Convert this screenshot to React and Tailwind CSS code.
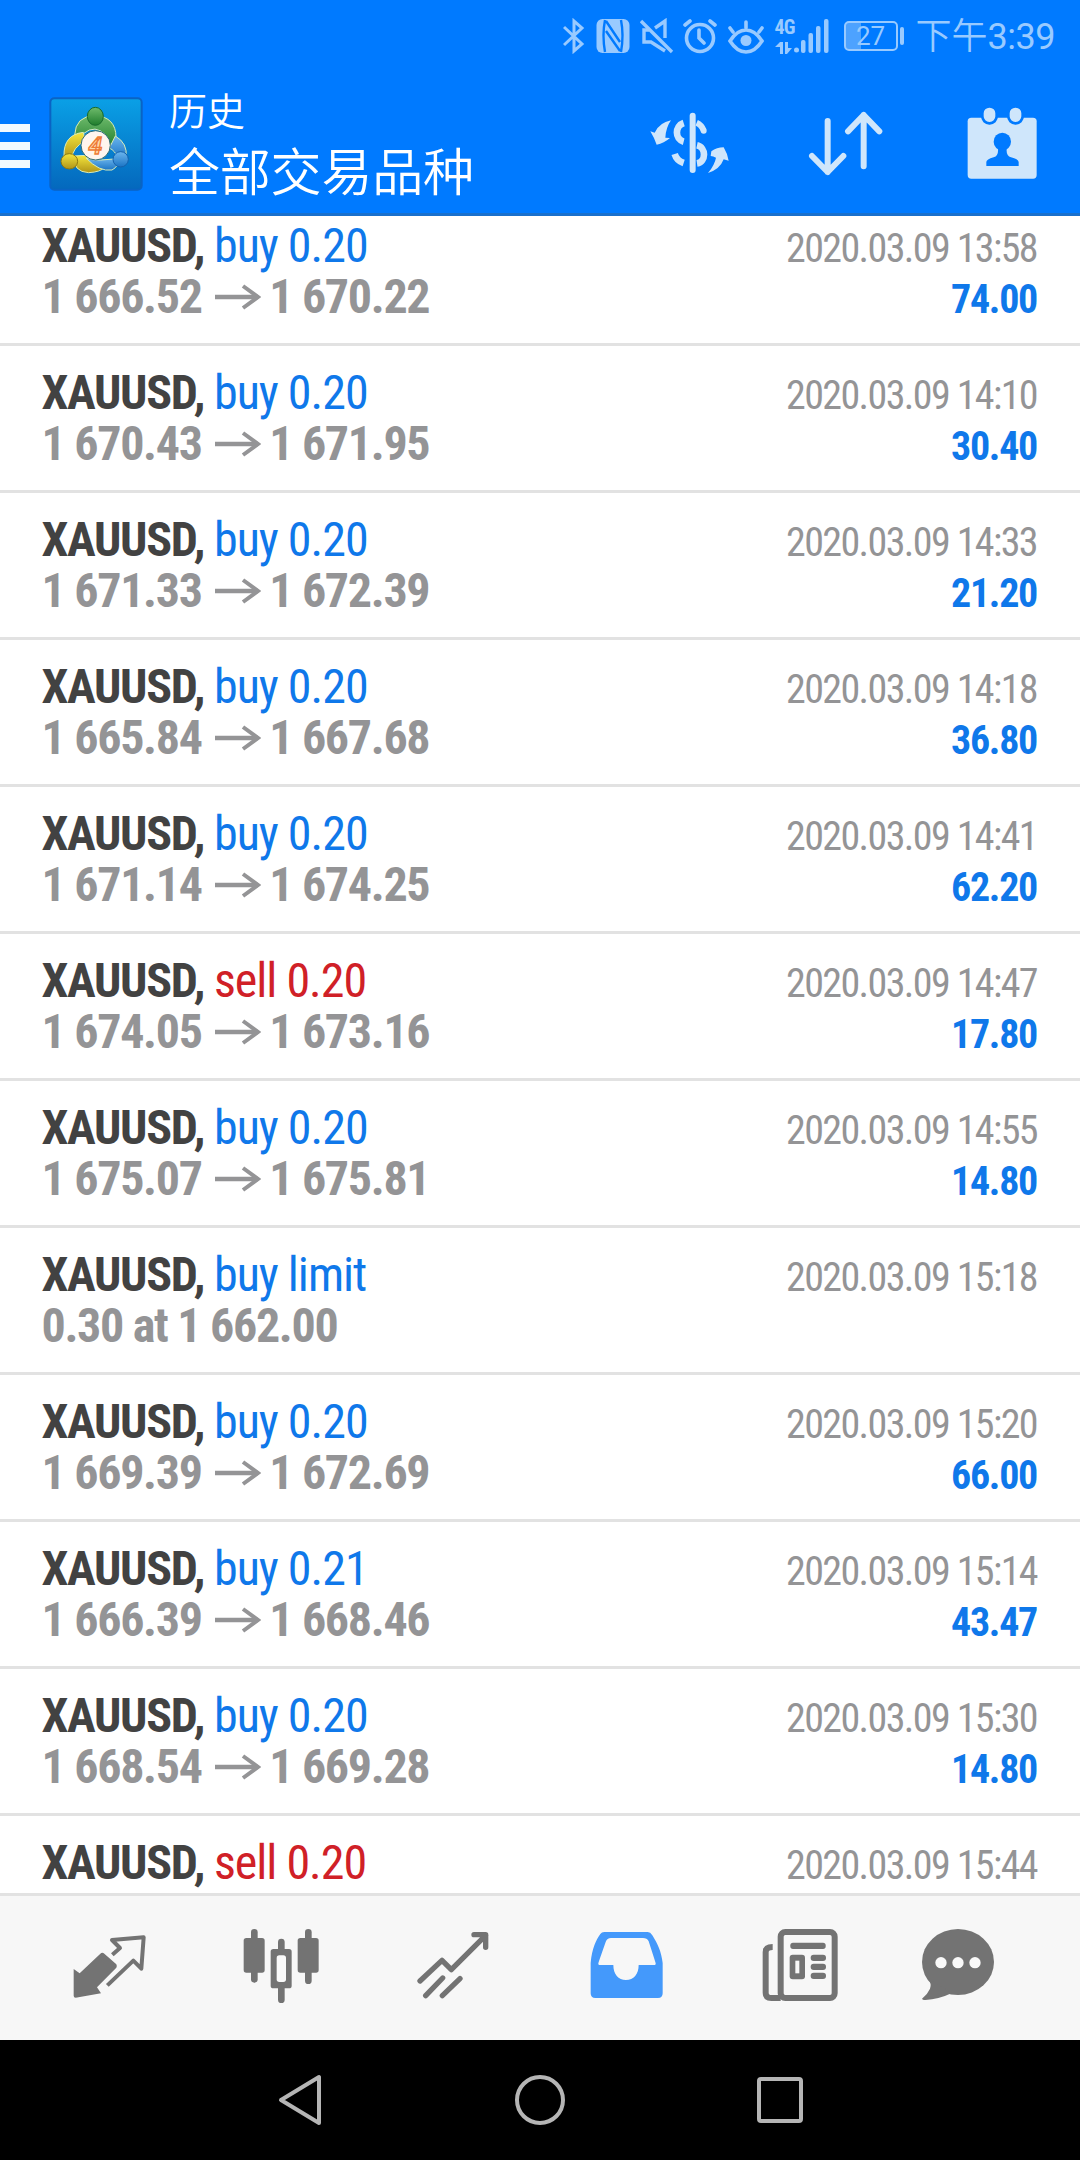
const deals = [
  { side: "buy", volume: "0.20", open: "1 666.52", close: "1 670.22", time: "2020.03.09 13:58", profit: "74.00" },
  { side: "buy", volume: "0.20", open: "1 670.43", close: "1 671.95", time: "2020.03.09 14:10", profit: "30.40" },
  { side: "buy", volume: "0.20", open: "1 671.33", close: "1 672.39", time: "2020.03.09 14:33", profit: "21.20" },
  { side: "buy", volume: "0.20", open: "1 665.84", close: "1 667.68", time: "2020.03.09 14:18", profit: "36.80" },
  { side: "buy", volume: "0.20", open: "1 671.14", close: "1 674.25", time: "2020.03.09 14:41", profit: "62.20" },
  { side: "sell", volume: "0.20", open: "1 674.05", close: "1 673.16", time: "2020.03.09 14:47", profit: "17.80" },
  { side: "buy", volume: "0.20", open: "1 675.07", close: "1 675.81", time: "2020.03.09 14:55", profit: "14.80" },
  { side: "buy", volume: "limit", note: "0.30 at 1 662.00", time: "2020.03.09 15:18" },
  { side: "buy", volume: "0.20", open: "1 669.39", close: "1 672.69", time: "2020.03.09 15:20", profit: "66.00" },
  { side: "buy", volume: "0.21", open: "1 666.39", close: "1 668.46", time: "2020.03.09 15:14", profit: "43.47" },
  { side: "buy", volume: "0.20", open: "1 668.54", close: "1 669.28", time: "2020.03.09 15:30", profit: "14.80" },
  { side: "sell", volume: "0.20", time: "2020.03.09 15:44" },
];

function StatusBar() {
  return (
    <div className="flex h-[72px] items-center justify-end pr-[25px] text-[#99caff]">
      <svg className="h-9 w-[22px]" viewBox="0 0 22 36" fill="none" stroke="currentColor" strokeWidth="3">
        <path d="M1 9 L19 26 L11 33 V3 L19 10 L1 27" />
      </svg>
      <svg className="ml-[11px] h-9 w-[34px]" viewBox="0 0 34 36">
        <rect x="0.5" y="1" width="33" height="34" rx="6" fill="currentColor" />
        <path d="M9 2 Q6 17 9 34 M10 3 L24 24 M10 13 L24 33 M25 2 Q28 17 25 34" fill="none" stroke="#007aff" strokeWidth="2.4" />
      </svg>
      <svg className="ml-2.5 h-9 w-[34px]" viewBox="0 0 34 36" fill="none" stroke="currentColor" strokeWidth="3.4">
        <path d="M1 3 L32 34" />
        <path d="M15 10 L25 3 V20 M9 12 H4 V24 H11 L25 33" />
      </svg>
      <svg className="ml-[9px] h-9 w-[34px]" viewBox="0 0 34 36" fill="none" stroke="currentColor" strokeWidth="3.6" strokeLinecap="round">
        <circle cx="17" cy="20" r="13.5" />
        <path d="M16 12 V20 L21 25 M2 7 L7 3 M32 7 L27 3" />
      </svg>
      <svg className="ml-2.5 h-9 w-[38px]" viewBox="0 0 38 36" fill="none" stroke="currentColor" strokeWidth="3.6" strokeLinecap="round">
        <path d="M3 23 Q10 12 19 12 Q28 12 35 23 Q28 34 19 34 Q10 34 3 23Z M19 10 V4 M6 14 L3 10 M32 14 L35 10" />
        <circle cx="19" cy="22.5" r="5.5" fill="currentColor" stroke="none" />
      </svg>
      <div className="ml-2.5 flex h-9 items-end">
        <div className="flex h-9 w-[19px] flex-col justify-between">
          <span className="text-[20px] leading-[19px] font-bold tracking-[-1px]">4G</span>
          <svg className="h-3 w-[18px]" viewBox="0 0 18 12" fill="currentColor">
            <path d="M0 5 L5 0 H8 V12 H5 V5Z M10 0 H13 V6 H17 L12 12 H10Z" />
          </svg>
        </div>
        <svg className="h-9 w-[35px]" viewBox="19 0 35 36" fill="currentColor">
          <circle cx="21.5" cy="32" r="2.5" />
          <rect x="26" y="22" width="4.5" height="13" rx="2" />
          <rect x="33.5" y="15" width="4.5" height="20" rx="2" />
          <rect x="41" y="8" width="4.5" height="27" rx="2" />
          <rect x="49" y="1" width="4.5" height="34" rx="2" />
        </svg>
      </div>
      <div className="ml-[15px] flex items-center gap-0.5">
        <div className="flex h-[30px] w-[54px] items-center justify-center rounded-[5px] border-2 border-current bg-linear-to-r from-[#4da2ff] from-30% to-transparent to-30% font-[Roboto] text-[26px] leading-none">
          27
        </div>
        <div className="h-[18px] w-1 rounded-sm bg-current" />
      </div>
      <div className="mt-0.5 ml-3 flex items-center font-[Roboto,'Noto_Sans_CJK_SC',sans-serif] text-[36px] leading-[44px]">
        <span className="font-[350]">下午</span>
        <span className="tracking-[-0.5px]">3:39</span>
      </div>
    </div>
  );
}

function Logo() {
  return (
    <svg className="mt-0.5 ml-[19px] size-[94px]" viewBox="15 15 282 282">
      <defs>
        <linearGradient id="tile" x1="0" y1="0" x2="0" y2="1">
          <stop offset="0" stopColor="#0aa0e6" />
          <stop offset="1" stopColor="#0468bd" />
        </linearGradient>
        <linearGradient id="green" x1="0" y1="0" x2="0" y2="1">
          <stop offset="0" stopColor="#6fbb6c" />
          <stop offset="1" stopColor="#1f7d2c" />
        </linearGradient>
        <linearGradient id="gold" x1="0" y1="0" x2="0" y2="1">
          <stop offset="0" stopColor="#f4e53c" />
          <stop offset="1" stopColor="#b09418" />
        </linearGradient>
        <linearGradient id="sky" x1="0" y1="0" x2="0" y2="1">
          <stop offset="0" stopColor="#6cb6ee" />
          <stop offset="1" stopColor="#1b74c4" />
        </linearGradient>
      </defs>
      <rect x="19" y="19" width="274" height="274" rx="12" fill="url(#tile)" stroke="#0a63c4" strokeWidth="6" />
      <g stroke="#d8ecb8" strokeWidth="3">
        <path d="M92 130 Q94 72 154 70 Q216 76 216 136 Q214 160 204 170 L186 130 Q154 95 118 125 Q104 122 92 130Z" fill="url(#green)" />
        <path d="M118 121 Q58 128 60 192 L84 200 Q84 168 124 146Z" fill="url(#gold)" />
        <path d="M88 192 Q88 240 134 242 Q170 240 182 226 Q150 220 128 190Z" fill="url(#gold)" />
        <path d="M214 132 Q252 154 246 196 L222 200 Q214 176 196 168Z" fill="url(#sky)" />
        <path d="M126 198 Q150 206 170 204 L224 200 Q226 222 204 234 Q166 240 126 198Z" fill="url(#sky)" />
      </g>
      <ellipse cx="154" cy="73" rx="24" ry="27" fill="url(#green)" stroke="#17692b" strokeWidth="3" />
      <ellipse cx="76" cy="208" rx="25" ry="23" fill="url(#gold)" stroke="#8d7a12" strokeWidth="3" />
      <ellipse cx="230" cy="202" rx="23" ry="23" fill="url(#sky)" stroke="#1561ac" strokeWidth="3" />
      <circle cx="155" cy="160" r="44" fill="#fff5ee" stroke="#2d6b73" strokeWidth="3" />
      <text x="154" y="186" textAnchor="middle" fontSize="74" fontFamily="Roboto, sans-serif" fontStyle="italic" fontWeight="700" fill="#ffd9a8" stroke="#ee7a35" strokeWidth="4">
        4
      </text>
    </svg>
  );
}

function Toolbar() {
  return (
    <div className="flex h-36 items-center border-b-[3px] border-[#1a70cc] pr-[43px]">
      <div className="mt-1.5 flex flex-col gap-2.5">
        <span className="h-2 w-[30px] bg-[#f2faff]" />
        <span className="h-2 w-[30px] bg-[#f2faff]" />
        <span className="h-2 w-[30px] bg-[#f2faff]" />
      </div>
      <Logo />
      <div className="mt-0.5 ml-[26px] flex-1 font-['Noto_Sans_CJK_SC',sans-serif] font-[350] text-white">
        <div className="text-[38px] leading-[50px]">历史</div>
        <div className="text-[51px] leading-[70px] tracking-[-0.2px]">全部交易品种</div>
      </div>
      <div className="flex items-center text-[#cfe6fb]">
        <svg className="h-[66px] w-[84px]" viewBox="0 0 252 198" fill="none" stroke="currentColor">
          <path d="M134 17 V180" strokeWidth="18" strokeLinecap="round" />
          <path d="M107 39 C80 48 80 88 107 95 M80 132 Q86 152 107 159 M147 106 C175 112 175 156 147 160" strokeWidth="20" />
          <path d="M146 38 Q160 44 167 61" strokeWidth="18" />
          <circle cx="167" cy="62" r="9" fill="currentColor" stroke="none" />
          <path
            d="M7 64 L20 68 Q34 38 69 31 Q54 52 52 83 L66 84 Q48 100 26 104 Q18 82 7 64Z M190 124 Q206 112 227 112 Q238 130 242 152 L227 148 Q216 178 180 189 Q200 165 204 143 Q196 138 188 138Z"
            fill="currentColor"
            stroke="none"
          />
        </svg>
        <svg className="ml-[76px] h-[66px] w-20" viewBox="0 0 240 198" fill="none" stroke="currentColor" strokeWidth="18" strokeLinecap="round" strokeLinejoin="round">
          <path d="M59 33 V186 M12 138 L59 186 L106 138 M167 169 V15 M120 64 L167 15 L214 64" />
        </svg>
        <svg className="ml-[79px] h-[74px] w-[70px]" viewBox="0 0 210 222" fill="currentColor">
          <rect x="2" y="35" width="207" height="183" rx="11" />
          <g stroke="#007aff" strokeWidth="8">
            <rect x="46" y="1" width="43" height="51" rx="21" />
            <rect x="124" y="1" width="43" height="51" rx="21" />
          </g>
          <g fill="#007aff">
            <ellipse cx="106" cy="107" rx="26" ry="27" />
            <path d="M58 180 V168 Q58 160 80 154 Q95 150 93 128 H119 Q117 150 132 154 Q155 160 155 168 V180Z" />
          </g>
        </svg>
      </div>
    </div>
  );
}

function DealRow({ deal }) {
  return (
    <div className="flex h-[147px] shrink-0 justify-between border-b-[3px] border-[#e2e2e2] pt-[21px] pr-[43px] pl-[41.5px] leading-[51px]">
      <div className="text-[48px] tracking-[-1.3px] whitespace-nowrap">
        <div>
          <span className="font-bold text-[#424242]">XAUUSD,</span>{" "}
          <span className={deal.side === "sell" ? "tracking-[-1px] text-[#d02027]" : "tracking-[-1px] text-[#0f78ea]"}>
            {deal.side} {deal.volume}
          </span>
        </div>
        <div className="flex items-center font-bold text-[#949496]">
          {deal.note}
          {deal.open && (
            <>
              {deal.open}
              <svg className="mr-2 ml-[13.5px] h-[26px] w-[46px]" viewBox="0 0 46 26" fill="none" stroke="currentColor" strokeWidth="4.5">
                <path d="M0 13 H43" />
                <path d="M28 2 L43 13 L28 24" strokeWidth="4" />
              </svg>
              {deal.close}
            </>
          )}
        </div>
      </div>
      <div className="text-right text-[40px] whitespace-nowrap">
        <div className="pt-[3px] tracking-[-1.6px] text-[#949496]">{deal.time}</div>
        <div className="font-bold tracking-[-1.3px] text-[#0f78ea]">{deal.profit}</div>
      </div>
    </div>
  );
}

function TabBar() {
  return (
    <div className="flex h-[147px] items-center border-t-[3px] border-[#e2e2e2] bg-[#f7f7f7] pl-[23px] text-[#737373]">
      <div className="flex w-[173px] justify-center">
        <svg className="size-20" viewBox="0 0 240 240">
          <path d="M11 123 L29 136 L91 77 Q97 72 103 77 L139 109 Q142 114 139 119 L81 178 L93 196 L17 209 Q11 209 11 203Z" fill="currentColor" />
          <path d="M127 80 L150 60 L126 36 L221 28 L214 122 L190 98 L112 172" fill="none" stroke="currentColor" strokeWidth="12" strokeLinejoin="round" />
        </svg>
      </div>
      <div className="flex w-[173px] justify-center">
        <svg className="size-20" viewBox="0 0 240 240" fill="currentColor">
          <rect x="2" y="30" width="63" height="104" rx="8" />
          <rect x="24" y="3" width="20" height="161" rx="10" />
          <rect x="164" y="30" width="63" height="104" rx="8" />
          <rect x="186" y="3" width="20" height="165" rx="10" />
          <rect x="105" y="32" width="20" height="193" rx="10" />
          <rect x="83" y="63" width="63" height="118" rx="8" />
          <rect x="101" y="82" width="28" height="80" rx="8" fill="#f9f9f9" />
        </svg>
      </div>
      <div className="flex w-[173px] justify-center">
        <svg className="size-20" viewBox="0 0 240 240" fill="none" stroke="currentColor" strokeWidth="16" strokeLinecap="round" strokeLinejoin="round">
          <path d="M12 159 L78 97 L106 125 L209 22 M174 20 H209 V58 M29 203 L80 150 M79 203 L132 152" />
        </svg>
      </div>
      <div className="flex w-[173px] justify-center">
        <svg className="size-20" viewBox="0 0 240 240" fill="#4499fb">
          <path
            fillRule="evenodd"
            d="M5 105 C9 60 22 35 34 18 Q38 12 46 12 H176 Q184 12 190 22 C206 48 217 70 221 105 V196 Q221 210 207 210 H19 Q5 210 5 196Z M30 111 Q26 109 29 102 L50 42 Q54 30 66 30 H162 Q174 30 179 40 L199 102 Q202 110 197 111 H149 C149 138 134 156 111 156 C88 156 73 138 73 111Z"
          />
        </svg>
      </div>
      <div className="flex w-[173px] justify-center">
        <svg className="size-20" viewBox="0 0 240 240">
          <g fill="none" stroke="currentColor" strokeWidth="18">
            <rect x="56" y="12" width="162" height="198" rx="14" />
            <path d="M32 57 Q11 57 11 72 V194 Q11 210 28 210 H56" />
          </g>
          <g fill="currentColor">
            <rect x="85" y="44" width="106" height="19" rx="8" />
            <rect x="146" y="80" width="46" height="19" rx="9" />
            <rect x="146" y="107" width="46" height="19" rx="9" />
            <rect x="146" y="134" width="46" height="19" rx="9" />
            <rect x="83" y="80" width="46" height="74" rx="9" />
          </g>
          <rect x="100" y="98" width="12" height="38" fill="#f7f7f7" />
        </svg>
      </div>
      <div className="flex w-[173px] justify-center pr-[34px]">
        <svg className="size-20" viewBox="-52 0 240 240" fill="currentColor">
          <ellipse cx="68" cy="102" rx="108" ry="99" />
          <path d="M-22 150 Q-10 168 -16 182 Q-24 200 -40 212 Q-38 217 -30 216 Q10 214 50 195Z" />
          <g fill="#f9f9f9">
            <circle cx="17" cy="104" r="17" />
            <circle cx="68" cy="104" r="17" />
            <circle cx="119" cy="104" r="17" />
          </g>
        </svg>
      </div>
    </div>
  );
}

function NavBar() {
  return (
    <div className="grid h-[120px] grid-cols-3 items-center justify-items-center bg-black px-[180px]">
      <svg className="h-[52px] w-11" viewBox="0 0 44 52" fill="none" stroke="#b5b5b5" strokeWidth="4" strokeLinejoin="round">
        <path d="M3 26 L41 3 V49Z" />
      </svg>
      <div className="size-[50px] rounded-full border-4 border-[#b5b5b5]" />
      <div className="size-[46px] rounded-[4px] border-4 border-[#b5b5b5]" />
    </div>
  );
}

export default function App() {
  return (
    <div className="flex h-[2160px] w-[1080px] flex-col overflow-hidden bg-white font-['Roboto_Condensed',Roboto,sans-serif]">
      <header className="shrink-0 bg-[#007aff]">
        <StatusBar />
        <Toolbar />
      </header>

      <main className="flex min-h-0 flex-1 flex-col overflow-hidden">
        {/* list is scrolled a little, so the first row starts above the edge */}
        <div className="-mt-[17px] flex flex-col">
          {deals.map((deal) => (
            <DealRow key={deal.time} deal={deal} />
          ))}
        </div>
      </main>

      <TabBar />
      <NavBar />
    </div>
  );
}
